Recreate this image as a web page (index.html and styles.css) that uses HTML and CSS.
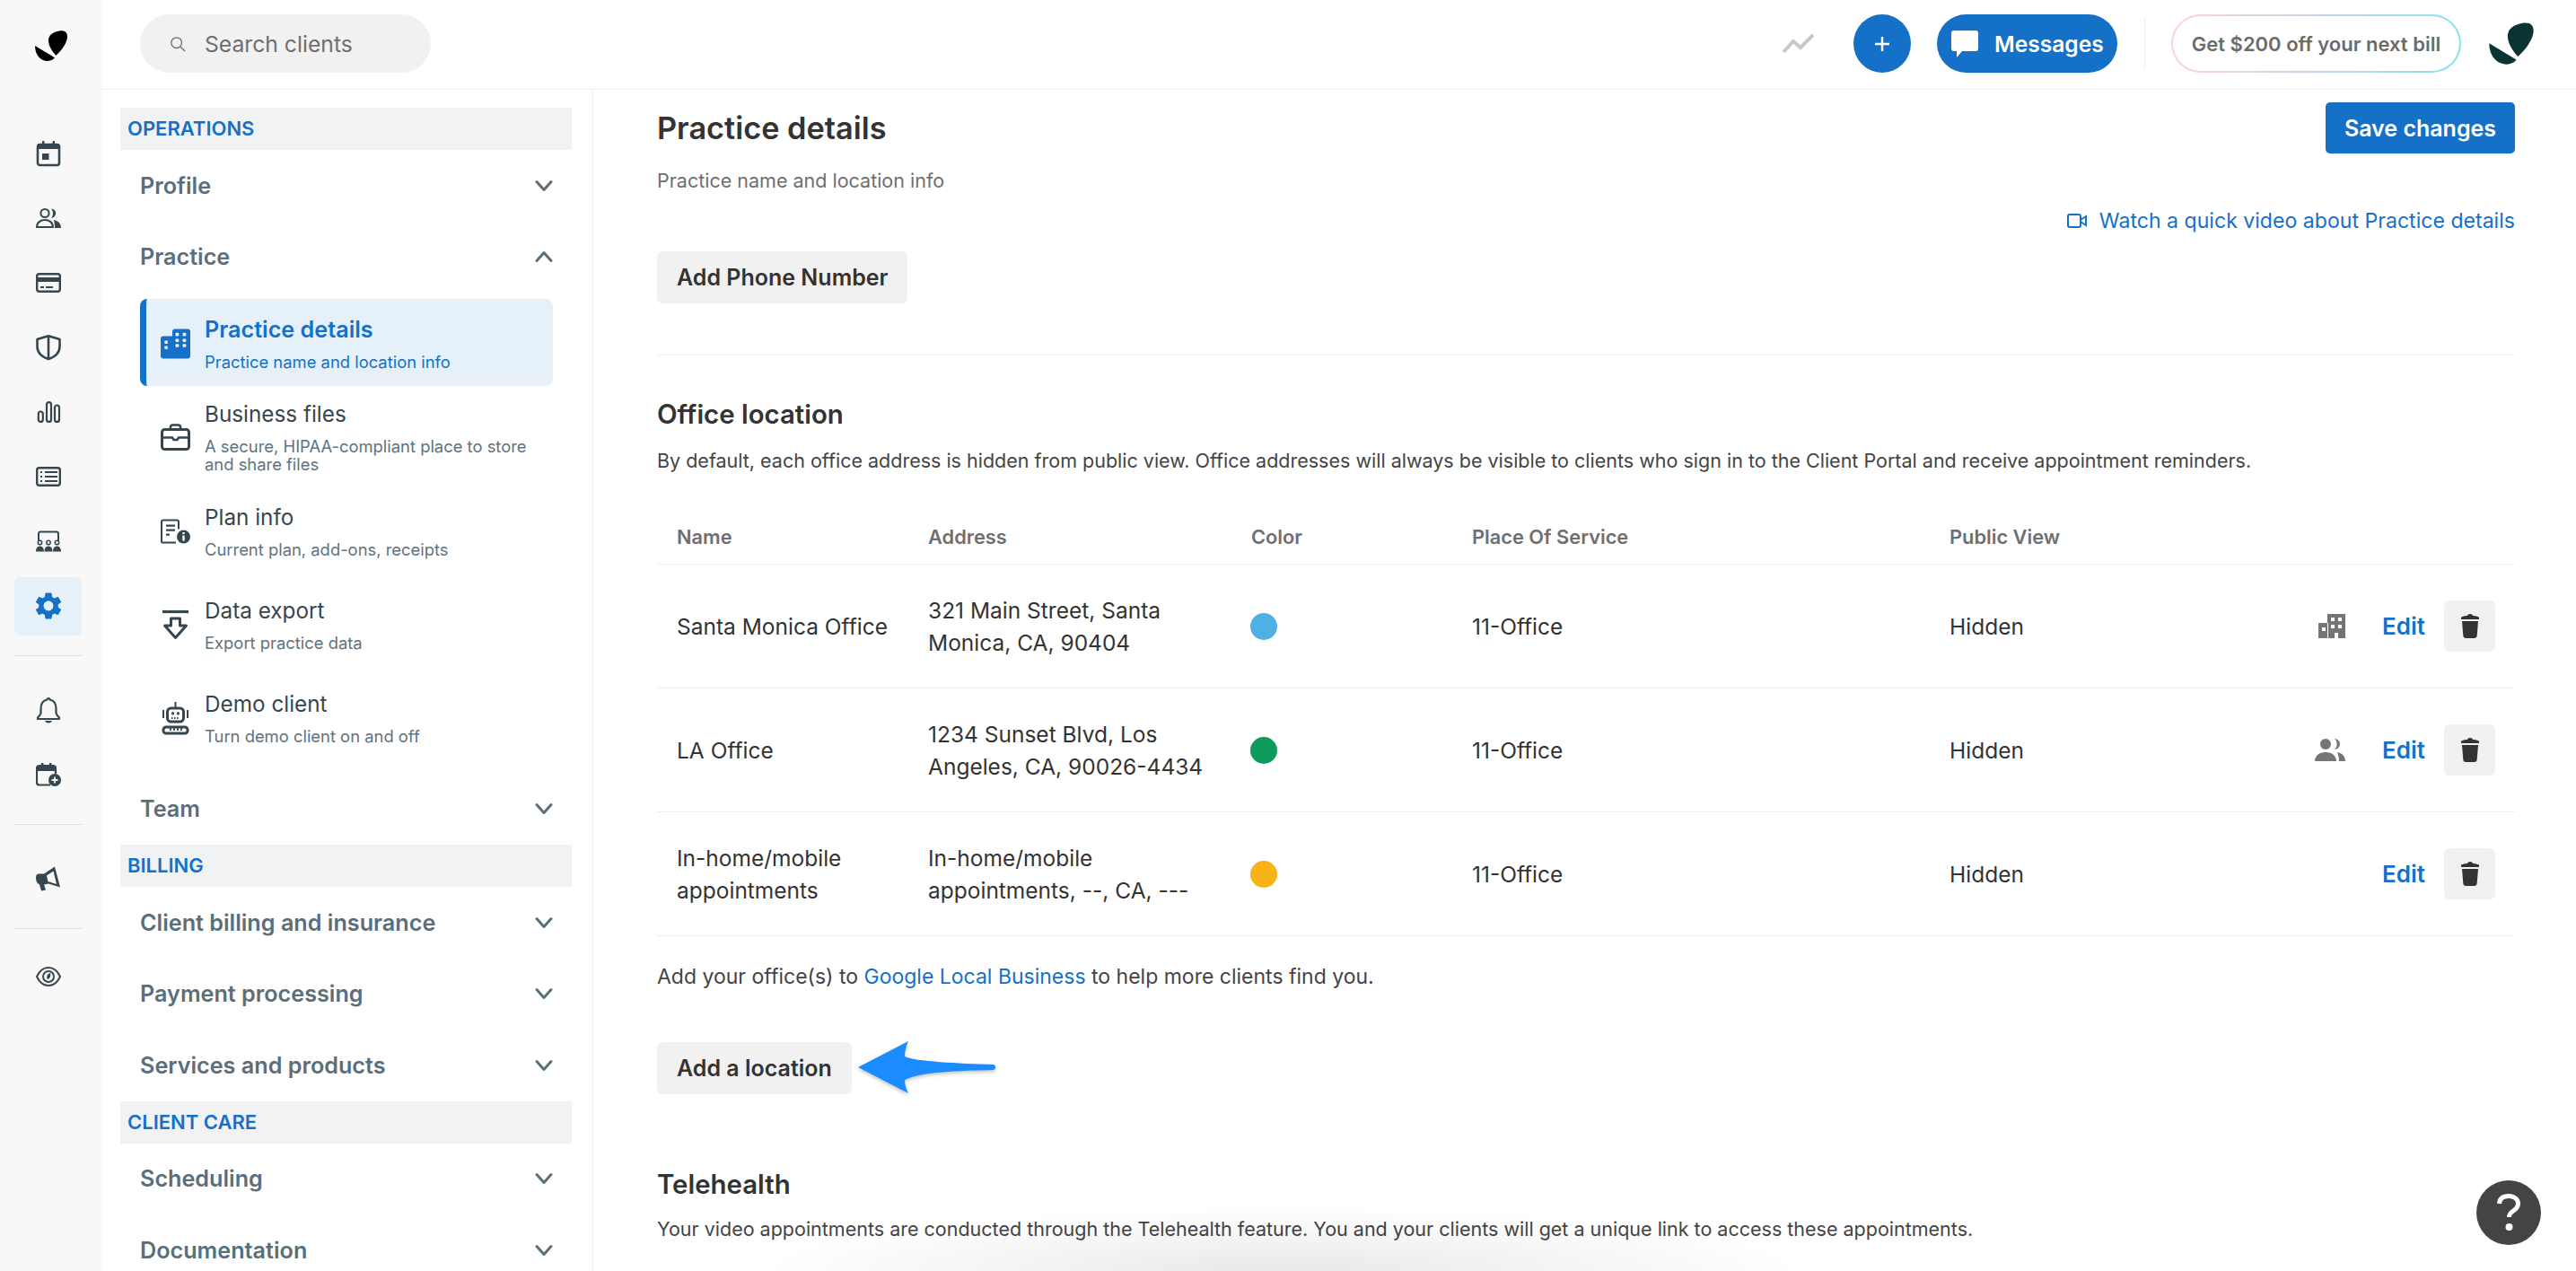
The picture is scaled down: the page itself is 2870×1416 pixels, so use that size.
FILE: index.html
```html
<!DOCTYPE html>
<html lang="en">
<head>
<meta charset="utf-8">
<title>Practice details</title>
<link rel="stylesheet" href="styles.css">
</head>
<body>
<svg class="sprite" aria-hidden="true">
  <symbol id="logo" viewBox="0 0 36 35"><path d="M23.300 27.700C19 23 15 17 15 11c0-6 5-9 12-10.400C33-.5 36 2 36 7c0 6-6 15-12.700 20.700z"/><path d="M0 17l22 13.300C21 32 18 34 14 34 6 34 0 27 0 17z"/></symbol>
  <symbol id="chev" viewBox="0 0 20 14"><path d="M2 2.500l8 9 8-9" fill="none" stroke="currentColor" stroke-width="3" stroke-linecap="round" stroke-linejoin="round"/></symbol>
  <symbol id="trash" viewBox="0 0 20 27"><path d="M7 2c0-1 1-2 3-2s3 1 3 2c3 0 7 1 7 2v2H0V4c0-1 4-2 7-2z"/><path d="M1 8h18l-1.300 16c-.1 2-1.200 3-3 3H5.300c-1.800 0-2.900-1-3-3z"/></symbol>
</svg>

<div class="app">
  <nav class="rail">
    <svg class="logo"><use href="#logo"/></svg>
    <a class="rail-item"><svg viewBox="0 0 28 28"><rect x="2" y="4" width="24" height="23" rx="2.500" fill="none" stroke="currentColor" stroke-width="2.600"/><path d="M2 3h24v6H2zM7 0h2.400v4H7zM18.600 0H21v4h-2.400z" fill="currentColor"/><rect x="7" y="14" width="7.500" height="7" fill="currentColor"/></svg></a>
    <a class="rail-item"><svg viewBox="0 0 28 22"><circle cx="10" cy="5.500" r="4.600" fill="none" stroke="currentColor" stroke-width="2"/><path d="M17 .4a5.200 5.200 0 0 1 0 10.400c1.500-1.500 2-3.500 2-5.200s-.5-3.700-2-5.200z" fill="currentColor"/><path d="M1 21c0-5 4-8 9-8s9 3 9 8z" fill="none" stroke="currentColor" stroke-width="2"/><path d="M20 13c5 1 8 4 8 9h-7c0-4-.5-7-1-9z" fill="currentColor"/></svg></a>
    <a class="rail-item"><svg viewBox="0 0 28 22"><rect x="1.200" y="1.200" width="25.600" height="19.600" rx="2.500" fill="none" stroke="currentColor" stroke-width="2.400"/><rect x="1" y="5" width="26" height="5" fill="currentColor"/><rect x="5" y="15" width="4" height="2" fill="currentColor"/><rect x="11" y="15" width="8" height="2" fill="currentColor"/></svg></a>
    <a class="rail-item"><svg viewBox="0 0 28 28"><path d="M14 1.300L26.500 5v8c0 6.500-5 11.500-12.500 14C6.500 24.500 1.500 19.500 1.500 13V5z" fill="none" stroke="currentColor" stroke-width="2.600" stroke-linejoin="round"/><path d="M14 2v25" stroke="currentColor" stroke-width="2.600"/></svg></a>
    <a class="rail-item"><svg viewBox="0 0 28 24"><rect x="2.800" y="11.500" width="5" height="11.400" rx="2.500" fill="none" stroke="currentColor" stroke-width="2.200"/><rect x="12" y="1.100" width="5" height="21.800" rx="2.500" fill="none" stroke="currentColor" stroke-width="2.200"/><rect x="21" y="4.500" width="5" height="18.400" rx="2.500" fill="none" stroke="currentColor" stroke-width="2.200"/></svg></a>
    <a class="rail-item"><svg viewBox="0 0 28 22"><rect x="1.200" y="1.200" width="25.600" height="19.600" rx="2.500" fill="none" stroke="currentColor" stroke-width="2.400"/><path d="M10 6h14M10 11h14M10 16h14" stroke="currentColor" stroke-width="2.200"/><path d="M5 6h2M5 11h2M5 16h2" stroke="currentColor" stroke-width="2.200"/></svg></a>
    <a class="rail-item"><svg viewBox="0 0 28 23"><path d="M3 11V3c0-1.500 1-2 2-2h18c1 0 2 .5 2 2v8" fill="none" stroke="currentColor" stroke-width="2"/><circle cx="4.500" cy="13" r="2.200" fill="none" stroke="currentColor" stroke-width="1.500"/><circle cx="14" cy="13" r="2.200" fill="none" stroke="currentColor" stroke-width="1.500"/><circle cx="23.500" cy="13" r="2.200" fill="none" stroke="currentColor" stroke-width="1.500"/><path d="M0 23c0-4 2-6 4.500-6S9 19 9 23zM9.500 23c0-4 2-6 4.500-6s4.500 2 4.500 6zM19 23c0-4 2-6 4.500-6s4.500 2 4.500 6z" fill="currentColor"/></svg></a>
    <a class="rail-item rail-active"><svg viewBox="0 0 24 24"><path fill="currentColor" d="M19.140 12.940c.04-.3.06-.61.06-.94 0-.32-.02-.64-.07-.94l2.030-1.580c.18-.14.23-.41.12-.61l-1.920-3.320c-.12-.22-.37-.29-.59-.22l-2.390.96c-.5-.38-1.030-.7-1.620-.94l-.36-2.540c-.04-.24-.24-.41-.48-.41h-3.840c-.24 0-.43.17-.47.41l-.36 2.540c-.59.24-1.130.57-1.620.94l-2.390-.96c-.22-.08-.47 0-.59.22L2.740 8.870c-.12.21-.08.47.12.61l2.030 1.580c-.05.3-.09.63-.09.94s.02.64.07.94l-2.030 1.580c-.18.14-.23.41-.12.61l1.920 3.320c.12.22.37.29.59.22l2.390-.96c.5.38 1.030.7 1.620.94l.36 2.540c.05.24.24.41.48.41h3.840c.24 0 .44-.17.47-.41l.36-2.540c.59-.24 1.130-.56 1.620-.94l2.390.96c.22.08.47 0 .59-.22l1.920-3.320c.12-.22.07-.47-.12-.61l-2.010-1.580zM12 15.600c-1.980 0-3.600-1.620-3.600-3.600s1.620-3.600 3.600-3.600 3.600 1.620 3.600 3.600-1.620 3.600-3.600 3.600z"/></svg></a>
    <div class="rail-rule"></div>
    <a class="rail-item"><svg viewBox="0 0 28 29"><path d="M14 1.500c-1 0-1.500.6-1.500 1.500C7.500 4 5.500 8.500 5.500 13v4.500c0 2-2 4-3.500 5.500v1.500h24V23c-1.500-1.500-3.500-3.500-3.500-5.500V13c0-4.500-2-9-7-10 0-.9-.5-1.500-1.500-1.500z" fill="none" stroke="currentColor" stroke-width="2.200" stroke-linejoin="round"/><path d="M10 26.500h8c-.5 1.500-2 2.500-4 2.500s-3.500-1-4-2.500z" fill="currentColor"/></svg></a>
    <a class="rail-item"><svg viewBox="0 0 28 26"><path d="M16 24.500H4c-1.500 0-3-1-3-3V6c0-2 1.500-3 3-3h15c2 0 3 1 3 3v6" fill="none" stroke="currentColor" stroke-width="2.200"/><path d="M1 3h21v6H1zM6 0h2.400v4H6zM15 0h2.400v4H15z" fill="currentColor"/><circle cx="21" cy="19" r="7" fill="currentColor"/><path d="M21 15.500v7M17.500 19h7" stroke="#f8f8f8" stroke-width="1.800"/></svg></a>
    <div class="rail-rule"></div>
    <a class="rail-item"><svg viewBox="0 0 28 27"><path d="M0 12c0-2 1-4 3-4h6L21 0l6 23-13-4-5 1 2 6-5 1-2-7c-2-1-4-3-4-8z" fill="currentColor"/><path d="M19.500 5l-7.500 5 1.500 6.500 9.500 3z" fill="#f8f8f8"/></svg></a>
    <div class="rail-rule rail-rule-tight"></div>
    <a class="rail-item"><svg viewBox="0 0 28 22"><path d="M14 1C8 1 3.500 5.500 1 11c2.500 5.500 7 10 13 10s10.500-4.500 13-10C24.500 5.500 20 1 14 1z" fill="none" stroke="currentColor" stroke-width="2"/><circle cx="14" cy="11" r="6" fill="none" stroke="currentColor" stroke-width="2"/><path d="M16 7c-3 1-5 4-3 7 2 0 4-3 3-7z" fill="currentColor"/></svg></a>
  </nav>

  <div class="page">
    <header class="topbar">
      <label class="search">
        <svg class="search-icon" viewBox="0 0 20 20"><circle cx="8.500" cy="8.500" r="6.500" fill="none" stroke="currentColor" stroke-width="1.500"/><path d="M13.500 13.500L19 19" stroke="currentColor" stroke-width="1.500"/></svg>
        <span>Search clients</span>
      </label>
      <div class="top-actions">
        <svg class="trend" viewBox="0 0 37 23"><path d="M2 21l11-12 8 7L35 2" fill="none" stroke="#c9c9c9" stroke-width="4"/></svg>
        <button class="plus"><svg viewBox="0 0 20 20"><path d="M10 2v16M2 10h16" stroke="#fff" stroke-width="2.400"/></svg></button>
        <button class="messages"><svg viewBox="0 0 30 30"><path d="M3 0h24c2 0 3 1 3 3v17c0 2-1 3-3 3H12l-6 7v-7H3c-2 0-3-1-3-3V3c0-2 1-3 3-3z" fill="#fff"/></svg>Messages</button>
        <div class="top-rule"></div>
        <button class="promo">Get $200 off your next bill</button>
        <svg class="top-logo"><use href="#logo"/></svg>
      </div>
    </header>

    <div class="body">
      <aside class="sidebar">
        <div class="group">OPERATIONS</div>
        <div class="nav"><span>Profile</span><svg class="chev"><use href="#chev"/></svg></div>
        <div class="nav"><span>Practice</span><svg class="chev up"><use href="#chev"/></svg></div>
        <div class="subs">
          <div class="sub active">
            <svg class="sub-icon" viewBox="0 0 33 33"><path d="M3 8h10V3c0-2 1-3 3-3h14c2 0 3 1 3 3v27c0 2-1 3-3 3H3c-2 0-3-1-3-3V11c0-2 1-3 3-3z" fill="currentColor"/><g fill="#e6f0f9"><rect x="4.300" y="13" width="3.600" height="3.600" rx="1"/><rect x="4.300" y="19" width="3.600" height="3.600" rx="1"/><rect x="16.500" y="4.300" width="3.800" height="3.800" rx="1"/><rect x="16.500" y="11" width="3.800" height="3.600" rx="1"/><rect x="16.500" y="16.700" width="3.800" height="3.600" rx="1"/><rect x="24.500" y="4.300" width="3.800" height="3.800" rx="1"/><rect x="24.500" y="11" width="3.800" height="3.600" rx="1"/><rect x="24.500" y="16.700" width="3.800" height="3.600" rx="1"/></g></svg>
            <div><div class="sub-title">Practice details</div><div class="sub-desc">Practice name and location info</div></div>
          </div>
          <div class="sub sub-tall">
            <svg class="sub-icon" viewBox="0 0 33 30"><path d="M11 6.500V3.500c0-1 1-2 2-2h7c1 0 2 1 2 2v3" fill="none" stroke="currentColor" stroke-width="2.600"/><rect x="1.500" y="6.500" width="30" height="22" rx="3" fill="none" stroke="currentColor" stroke-width="3"/><path d="M2 15.500h11l1.500 2.500h4l1.500-2.500h11" fill="none" stroke="currentColor" stroke-width="2.600"/></svg>
            <div><div class="sub-title">Business files</div><div class="sub-desc">A secure, HIPAA-compliant place to store<br>and share files</div></div>
          </div>
          <div class="sub">
            <svg class="sub-icon" viewBox="0 0 33 27"><path d="M20 11V3c0-1-.8-2-2-2H3C2 1 1 2 1 3v22c0 1 1 1 2 1h14" fill="none" stroke="currentColor" stroke-width="2"/><path d="M6 6h10v2.200H6zM6 11h10v2.200H6zM6 16h4v2.200H6z" fill="currentColor"/><circle cx="25.500" cy="19.500" r="7.500" fill="currentColor"/><path d="M25.500 18v6M25.500 14.500v2" stroke="#fff" stroke-width="2.400"/></svg>
            <div><div class="sub-title">Plan info</div><div class="sub-desc">Current plan, add-ons, receipts</div></div>
          </div>
          <div class="sub">
            <svg class="sub-icon" viewBox="0 0 33 33"><path d="M2 2h29" stroke="currentColor" stroke-width="3.200"/><path d="M11.500 9.500h10v8h7L16.500 31 4.500 17.500h7z" fill="none" stroke="currentColor" stroke-width="3" stroke-linejoin="round"/></svg>
            <div><div class="sub-title">Data export</div><div class="sub-desc">Export practice data</div></div>
          </div>
          <div class="sub">
            <svg class="sub-icon" viewBox="0 0 33 38"><path d="M16.500 1v7" stroke="currentColor" stroke-width="2"/><rect x="7.500" y="8" width="18" height="15" rx="4" fill="none" stroke="currentColor" stroke-width="3"/><rect x="12" y="12" width="3" height="3.400" rx="1.500" fill="currentColor"/><rect x="18" y="12" width="3" height="3.400" rx="1.500" fill="currentColor"/><path d="M12 19h9" stroke="currentColor" stroke-width="2" stroke-dasharray="1.500 1.500"/><path d="M3 10v9M30 10v9" stroke="currentColor" stroke-width="2"/><rect x="3" y="29" width="27" height="7" rx="3" fill="none" stroke="currentColor" stroke-width="3"/><path d="M11 28v5M15 28v5M19 28v5M23 28v5" stroke="currentColor" stroke-width="1.800"/></svg>
            <div><div class="sub-title">Demo client</div><div class="sub-desc">Turn demo client on and off</div></div>
          </div>
        </div>
        <div class="nav nav-team"><span>Team</span><svg class="chev"><use href="#chev"/></svg></div>
        <div class="group">BILLING</div>
        <div class="nav"><span>Client billing and insurance</span><svg class="chev"><use href="#chev"/></svg></div>
        <div class="nav"><span>Payment processing</span><svg class="chev"><use href="#chev"/></svg></div>
        <div class="nav"><span>Services and products</span><svg class="chev"><use href="#chev"/></svg></div>
        <div class="group">CLIENT CARE</div>
        <div class="nav"><span>Scheduling</span><svg class="chev"><use href="#chev"/></svg></div>
        <div class="nav"><span>Documentation</span><svg class="chev"><use href="#chev"/></svg></div>
      </aside>

      <main class="main">
        <div class="head">
          <div class="head-left">
            <h1>Practice details</h1>
            <p class="lede">Practice name and location info</p>
          </div>
          <div class="head-right">
            <button class="save">Save changes</button>
            <a class="video"><svg viewBox="0 0 22 18"><rect x="1" y="2" width="14" height="14" rx="2" fill="none" stroke="currentColor" stroke-width="2"/><path d="M15 8l6-4v10l-6-4" fill="none" stroke="currentColor" stroke-width="2"/></svg>Watch a quick video about Practice details</a>
          </div>
        </div>
        <button class="btn btn-phone">Add Phone Number</button>
        <hr class="rule">
        <h2 class="h-office">Office location</h2>
        <p class="para para-small para-office">By default, each office address is hidden from public view. Office addresses will always be visible to clients who sign in to the Client Portal and receive appointment reminders.</p>

        <div class="table">
          <div class="row row-head"><div>Name</div><div>Address</div><div>Color</div><div>Place Of Service</div><div>Public View</div><div></div></div>
          <div class="row">
            <div>Santa Monica Office</div><div>321 Main Street, Santa<br>Monica, CA, 90404</div><div><span class="dot dot-blue"></span></div><div>11-Office</div><div>Hidden</div>
            <div class="acts">
              <svg class="loc-icon" viewBox="0 0 34 27"><path d="M4 10h10V0h20v27h-8v-6h-4v6H4zM18 4v4h4V4zm8 0v4h4V4zM18 12v4h4v-4zm8 0v4h4v-4zM8 15v4h4v-4z" fill="#757575" fill-rule="evenodd"/><path d="M14.500 10v17" stroke="#fff" stroke-width="1"/></svg>
              <a class="edit">Edit</a><button class="del"><svg><use href="#trash"/></svg></button>
            </div>
          </div>
          <div class="row">
            <div>LA Office</div><div>1234 Sunset Blvd, Los<br>Angeles, CA, 90026-4434</div><div><span class="dot dot-green"></span></div><div>11-Office</div><div>Hidden</div>
            <div class="acts">
              <svg class="loc-icon" viewBox="0 0 34 25"><circle cx="12" cy="6" r="6" fill="#757575"/><path d="M22 0a6 6 0 0 1 0 12c2-2 2.500-3.500 2.500-6S24 2 22 0z" fill="#757575"/><path d="M0 25c0-6 5-10 12-10s12 4 12 10z" fill="#757575"/><path d="M25 15c5 1 9 4 9 10h-7c0-4-1-7-2-10z" fill="#757575"/></svg>
              <a class="edit">Edit</a><button class="del"><svg><use href="#trash"/></svg></button>
            </div>
          </div>
          <div class="row">
            <div>In-home/mobile<br>appointments</div><div>In-home/mobile<br>appointments, --, CA, ---</div><div><span class="dot dot-yellow"></span></div><div>11-Office</div><div>Hidden</div>
            <div class="acts"><a class="edit">Edit</a><button class="del"><svg><use href="#trash"/></svg></button></div>
          </div>
        </div>

        <p class="para para-local">Add your office(s) to <a class="link">Google Local Business</a> to help more clients find you.</p>
        <div class="add-row">
          <button class="btn">Add a location</button>
          <svg class="arrow" viewBox="0 0 154 58"><path d="M0 29L56 0c-3 6-4 12-4 17 8 5 58 8 98 9a3 3 0 0 1 0 6c-40 1-80 2-98 11 0 5 1 9 4 15z" fill="#1a8cff"/></svg>
        </div>
        <h2 class="h-tele">Telehealth</h2>
        <p class="para para-small para-tele">Your video appointments are conducted through the Telehealth feature. You and your clients will get a unique link to access these appointments.</p>
      </main>
    </div>
  </div>
</div>
<div class="bottom-shade"></div>
<button class="help"><svg viewBox="0 0 26 42"><path d="M2.500 11C3 5 7 2.500 13 2.500c6 0 10.500 3.500 10.500 8.500 0 4.500-3 6.500-6 8.500-2.500 1.700-4 3-4 6.500" fill="none" stroke="#fff" stroke-width="5"/><circle cx="13.500" cy="37" r="4" fill="#fff"/></svg></button>
</body>
</html>
```

FILE: styles.css
```css
* { box-sizing: border-box; }
html, body { margin: 0; height: 100%; overflow: hidden; background: #fff; }
body { font-family: Inter, "Noto Sans", sans-serif; color: #333; font-size: 24px; }
button { font-family: inherit; border: 0; cursor: pointer; padding: 0; }
p, h1, h2 { margin: 0; }
.sprite { display: none; }

.app { display: flex; height: 1416px; }

/* icon rail */
.rail { width: 113px; flex: none; background: #f8f8f8; display: flex; flex-direction: column; align-items: flex-start; color: #36464f; padding: 34px 0 0 16px; }
.logo { width: 36px; height: 35px; margin: 0 0 69.500px 23px; fill: #000; }
.rail-item { width: 75px; height: 65px; flex: none; margin-bottom: 7px; display: flex; align-items: center; justify-content: center; border-radius: 6px; }
.rail-item svg { width: 28px; height: 30px; }
.rail-active { background: #e6f0f9; color: #1570c8; }
.rail-active svg { width: 36px; height: 38px; }
.rail-rule { width: 75px; height: 1px; flex: none; background: #dedede; margin: 15px 0 28px; }
.rail-rule-tight { margin-bottom: 21px; }

.page { flex: 1; min-width: 0; display: flex; flex-direction: column; }

/* top bar */
.topbar { height: 100px; flex: none; border-bottom: 1px solid #eee; display: flex; align-items: flex-start; justify-content: space-between; padding: 16px 46px 0 43px; }
.search { width: 324px; height: 65px; border-radius: 33px; background: #f1f1f1; display: flex; align-items: center; gap: 21px; padding-left: 33px; color: #6f6f6f; font-size: 24.700px; }
.search-icon { width: 18px; height: 20px; flex: none; }
.top-actions { display: flex; align-items: center; }
.trend { width: 37px; height: 23px; margin-right: 43px; }
.plus { width: 64px; height: 65px; border-radius: 50%; background: #1570c8; display: flex; align-items: center; justify-content: center; margin-right: 29px; }
.plus svg { width: 20px; height: 20px; }
.messages { width: 201px; height: 65px; border-radius: 33px; background: #1570c8; color: #fff; font-size: 24.600px; font-weight: 600; display: flex; align-items: center; gap: 18px; padding-left: 16px; margin-right: 30px; }
.messages svg { width: 30px; height: 30px; flex: none; }
.top-rule { width: 1px; height: 57px; background: #eee; margin-right: 29px; }
.promo { width: 323px; height: 65px; border-radius: 33px; border: 2px solid transparent; background: linear-gradient(#fff, #fff) padding-box, linear-gradient(90deg, #f9d5d5, #c8d4e4 50%, #8adff3) border-box; color: #6b6b6b; font-size: 22px; font-weight: 600; margin-right: 30px; }
.top-logo { width: 52px; height: 48px; fill: #0a3433; }

.body { flex: 1; min-height: 0; display: flex; }

/* sidebar */
.sidebar { width: 548px; flex: none; border-right: 1px solid #eee; padding: 20px 23px 0 21px; overflow: hidden; }
.group { height: 47px; background: #f1f2f4; color: #1570c8; font-weight: 600; font-size: 22px; line-height: 47px; padding-left: 8px; }
.nav { height: 79.500px; display: flex; align-items: center; justify-content: space-between; padding: 0 21px 0 22px; color: #5a6e7b; font-size: 25.200px; font-weight: 600; }
.nav-team { height: 80px; }
.chev { width: 20px; height: 14px; color: #5a6e7b; }
.chev.up { transform: rotate(180deg); }
.subs { display: flex; flex-direction: column; gap: 7px; margin: 7px 21px 14px 22px; }
.sub { min-height: 97px; display: flex; align-items: center; gap: 16px; border-left: 7px solid transparent; border-radius: 8px; padding: 20px 0 17px 16px; }
.sub-tall { padding: 10px 0 8px 16px; }
.active { background: #e6f0f9; border-left-color: #1570c8; color: #1570c8; }
.sub-icon { width: 33px; height: 38px; flex: none; color: #36464f; }
.active .sub-icon { color: #1570c8; }
.sub-title { font-size: 24.300px; line-height: 28px; color: #36464f; }
.active .sub-title { color: #1570c8; font-weight: 600; font-size: 25.200px; }
.sub-desc { font-size: 18.400px; line-height: 20px; margin-top: 12px; color: #607380; }
.active .sub-desc { color: #1570c8; }

/* main */
.main { flex: 1; min-width: 0; padding: 14px 68px 0 71px; overflow: hidden; }
.head { display: flex; justify-content: space-between; }
.head-left { padding-top: 7px; }
h1 { font-size: 34.300px; line-height: 44px; font-weight: 600; color: #333; }
.lede { margin-top: 22px; font-size: 21.500px; line-height: 28px; color: #6f6f6f; }
.head-right { display: flex; flex-direction: column; align-items: flex-end; }
.save { width: 211px; height: 57px; border-radius: 5px; background: #1570c8; color: #fff; font-size: 25px; font-weight: 600; }
.video { margin-top: 61px; height: 28px; line-height: 28px; color: #1570c8; font-size: 23.100px; display: flex; align-items: center; gap: 14px; }
.video svg { width: 22px; height: 18px; }
.btn { height: 58px; padding: 0 22px; border-radius: 6px; background: #f1f1f1; color: #333; font-size: 25px; font-weight: 600; }
.btn-phone { display: block; margin-top: 20px; }
.rule { height: 1px; border: 0; background: #eee; margin: 57px 0 0; }
h2 { font-size: 29.400px; line-height: 36px; font-weight: 600; color: #333; }
.h-office { margin-top: 48px; }
.para { font-size: 23px; line-height: 32px; color: #444; }
.para-small { font-size: 21.500px; }
.para-office { margin-top: 17px; }

.table { margin-top: 38px; }
.row { display: grid; grid-template-columns: 280px 360px 246px 532px 1fr auto; align-items: center; padding: 0 22px 0 22px; height: 138px; border-bottom: 1px solid #eee; font-size: 24.500px; line-height: 36px; color: #333; }
.row-head { height: 62px; font-size: 21.800px; font-weight: 600; color: #6f6f6f; }
.dot { display: block; width: 30px; height: 30px; border-radius: 50%; margin-left: -1px; }
.dot-blue { background: #4fb0e4; }
.dot-green { background: #0d9b5b; }
.dot-yellow { background: #fab317; }
.acts { display: flex; align-items: center; }
.loc-icon { width: 34px; height: 27px; margin-right: 41px; }
.edit { color: #1570c8; font-weight: 600; font-size: 26px; margin-right: 21px; }
.del { width: 57px; height: 57px; border-radius: 6px; background: #f1f1f1; display: flex; align-items: center; justify-content: center; }
.del svg { width: 20px; height: 27px; fill: #333; }
.para-local { margin-top: 29px; }
.link { color: #1570c8; }
.add-row { display: flex; align-items: center; gap: 7px; margin-top: 57px; }
.arrow { width: 154px; height: 58px; filter: drop-shadow(0 2px 2px rgba(0,0,0,.25)); margin-top: -2px; }
.h-tele { margin-top: 83px; }
.para-tele { margin-top: 15px; }

/* overlays */
.bottom-shade { position: fixed; left: 850px; width: 1160px; bottom: 0; height: 70px; background: radial-gradient(ellipse 50% 100% at 50% 100%, rgba(0,0,0,.09), rgba(0,0,0,0)); pointer-events: none; }
.help { position: fixed; left: 2759px; top: 1315px; width: 72px; height: 72px; border-radius: 50%; background: #444; display: flex; align-items: center; justify-content: center; }
.help svg { width: 26px; height: 42px; }
```
